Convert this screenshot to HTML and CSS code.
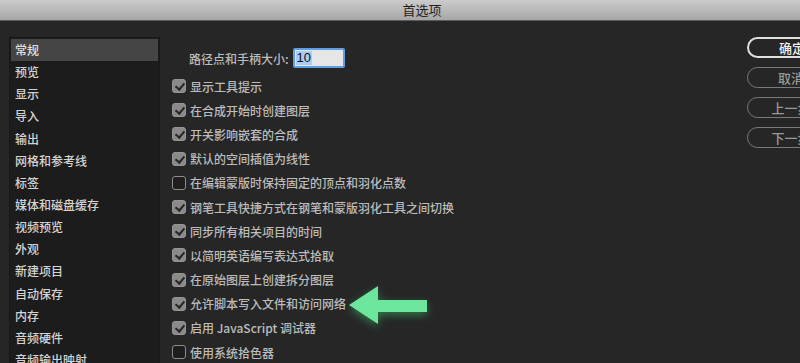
FILE: index.html
```html
<!DOCTYPE html>
<html lang="zh">
<head>
<meta charset="utf-8">
<link rel="stylesheet" href="styles.css">
</head>
<body>
<div class="titlebar">首选项</div>
<div class="main">
  <ul class="sidebar">
    <li class="selected">常规</li>
    <li>预览</li>
    <li>显示</li>
    <li>导入</li>
    <li>输出</li>
    <li>网格和参考线</li>
    <li>标签</li>
    <li>媒体和磁盘缓存</li>
    <li>视频预览</li>
    <li>外观</li>
    <li>新建项目</li>
    <li>自动保存</li>
    <li>内存</li>
    <li>音频硬件</li>
    <li>音频输出映射</li>
  </ul>
  <div class="content">
    <div class="field-row">
      <span class="field-label">路径点和手柄大小:</span>
      <span class="input"><span class="sel">10</span></span>
    </div>
    <ul class="options">
      <li><span class="cb on"></span>显示工具提示</li>
      <li><span class="cb on"></span>在合成开始时创建图层</li>
      <li><span class="cb on"></span>开关影响嵌套的合成</li>
      <li><span class="cb on"></span>默认的空间插值为线性</li>
      <li><span class="cb"></span>在编辑蒙版时保持固定的顶点和羽化点数</li>
      <li><span class="cb on"></span>钢笔工具快捷方式在钢笔和蒙版羽化工具之间切换</li>
      <li><span class="cb on"></span>同步所有相关项目的时间</li>
      <li><span class="cb on"></span>以简明英语编写表达式拾取</li>
      <li><span class="cb on"></span>在原始图层上创建拆分图层</li>
      <li><span class="cb on"></span>允许脚本写入文件和访问网络</li>
      <li><span class="cb on"></span>启用 JavaScript 调试器</li>
      <li><span class="cb"></span>使用系统拾色器</li>
    </ul>
  </div>
  <div class="buttons">
    <div class="btn default">确定</div>
    <div class="btn">取消</div>
    <div class="btn">上一步</div>
    <div class="btn">下一步</div>
  </div>
</div>
<svg class="arrow" width="100" height="60" viewBox="0 0 100 60">
  <polygon points="9,24 38,5 38,19 87,19 87,31 38,31 38,43" fill="#6ce69c"/>
</svg>
</body>
</html>
```
FILE: styles.css
```css
html, body {
  margin: 0;
  padding: 0;
  width: 800px;
  height: 363px;
  overflow: hidden;
  background: #262626;
  font-family: "Noto Sans CJK SC", "Noto Sans", sans-serif;
  font-size: 12px;
  font-weight: 500;
  position: relative;
}
.titlebar {
  height: 20px;
  border-bottom: 1px solid #5c5c5c;
  background: linear-gradient(#cbcbcb, #a7a7a7);
  color: #1e1e1e;
  font-size: 13px;
  font-weight: 400;
  line-height: 20px;
  text-align: center;
  padding-left: 44px;
}
.main {
  display: flex;
  padding-top: 16px;
}
.sidebar {
  list-style: none;
  margin: 0 0 0 9px;
  padding: 1px 1px 0 1px;
  width: 147px;
  height: 340px;
  background: #1c1c1c;
  border: 1px solid #181818;
  border-bottom: none;
  flex: none;
}
.sidebar li {
  height: 22.15px;
  line-height: 22px;
  padding-left: 4px;
  color: #d4d4d4;
}
.sidebar li.selected {
  background: #454545;
  color: #e0e0e0;
}
.content {
  margin-left: 13px;
  padding-top: 11px;
  width: 540px;
  flex: none;
}
.field-row {
  display: flex;
  align-items: center;
  height: 20px;
  padding-left: 16px;
}
.field-label {
  color: #bbbbbb;
  margin-right: 4px;
}
.input {
  width: 47px;
  height: 16px;
  background: #e6e6e6;
  border: 2px solid #5e9fe6;
  border-radius: 2px;
  display: flex;
  align-items: center;
  padding-left: 1px;
}
.sel {
  background: #a9cdf6;
  color: #111;
  line-height: 14px;
  font-family: "Liberation Sans", sans-serif;
  font-weight: 400;
  font-size: 13px;
  padding: 0 1px;
}
.options {
  list-style: none;
  margin: 6px 0 0 0;
  padding: 0;
}
.options li {
  height: 24.2px;
  display: flex;
  align-items: center;
  color: #bcbcbc;
  white-space: nowrap;
}
.cb {
  width: 14px;
  height: 14px;
  border-radius: 3px;
  margin-right: 4px;
  margin-left: -1px;
  box-sizing: border-box;
  border: 1px solid #8c8c8c;
  background: #1e1e1e;
  position: relative;
  flex: none;
}
.cb.on {
  background: #8a8a8a;
  border-color: #959595;
}
.cb.on::after {
  content: "";
  position: absolute;
  left: 3.5px;
  top: 1px;
  width: 4px;
  height: 7px;
  border-right: 2px solid #262626;
  border-bottom: 2px solid #262626;
  transform: rotate(40deg);
}
.buttons {
  margin-left: 34px;
  display: flex;
  flex-direction: column;
  gap: 9px;
  flex: none;
}
.btn {
  width: 86px;
  height: 19px;
  border: 1px solid #7a7a7a;
  border-radius: 11px;
  color: #9a9a9a;
  text-align: center;
  line-height: 19px;
  font-size: 13px;
}
.btn.default {
  border: 2px solid #e0e0e0;
  height: 17px;
  line-height: 17px;
  color: #f0f0f0;
}
.arrow {
  position: absolute;
  left: 340px;
  top: 281px;
  filter: drop-shadow(0 3px 4px rgba(60, 220, 120, 0.45));
}
```
